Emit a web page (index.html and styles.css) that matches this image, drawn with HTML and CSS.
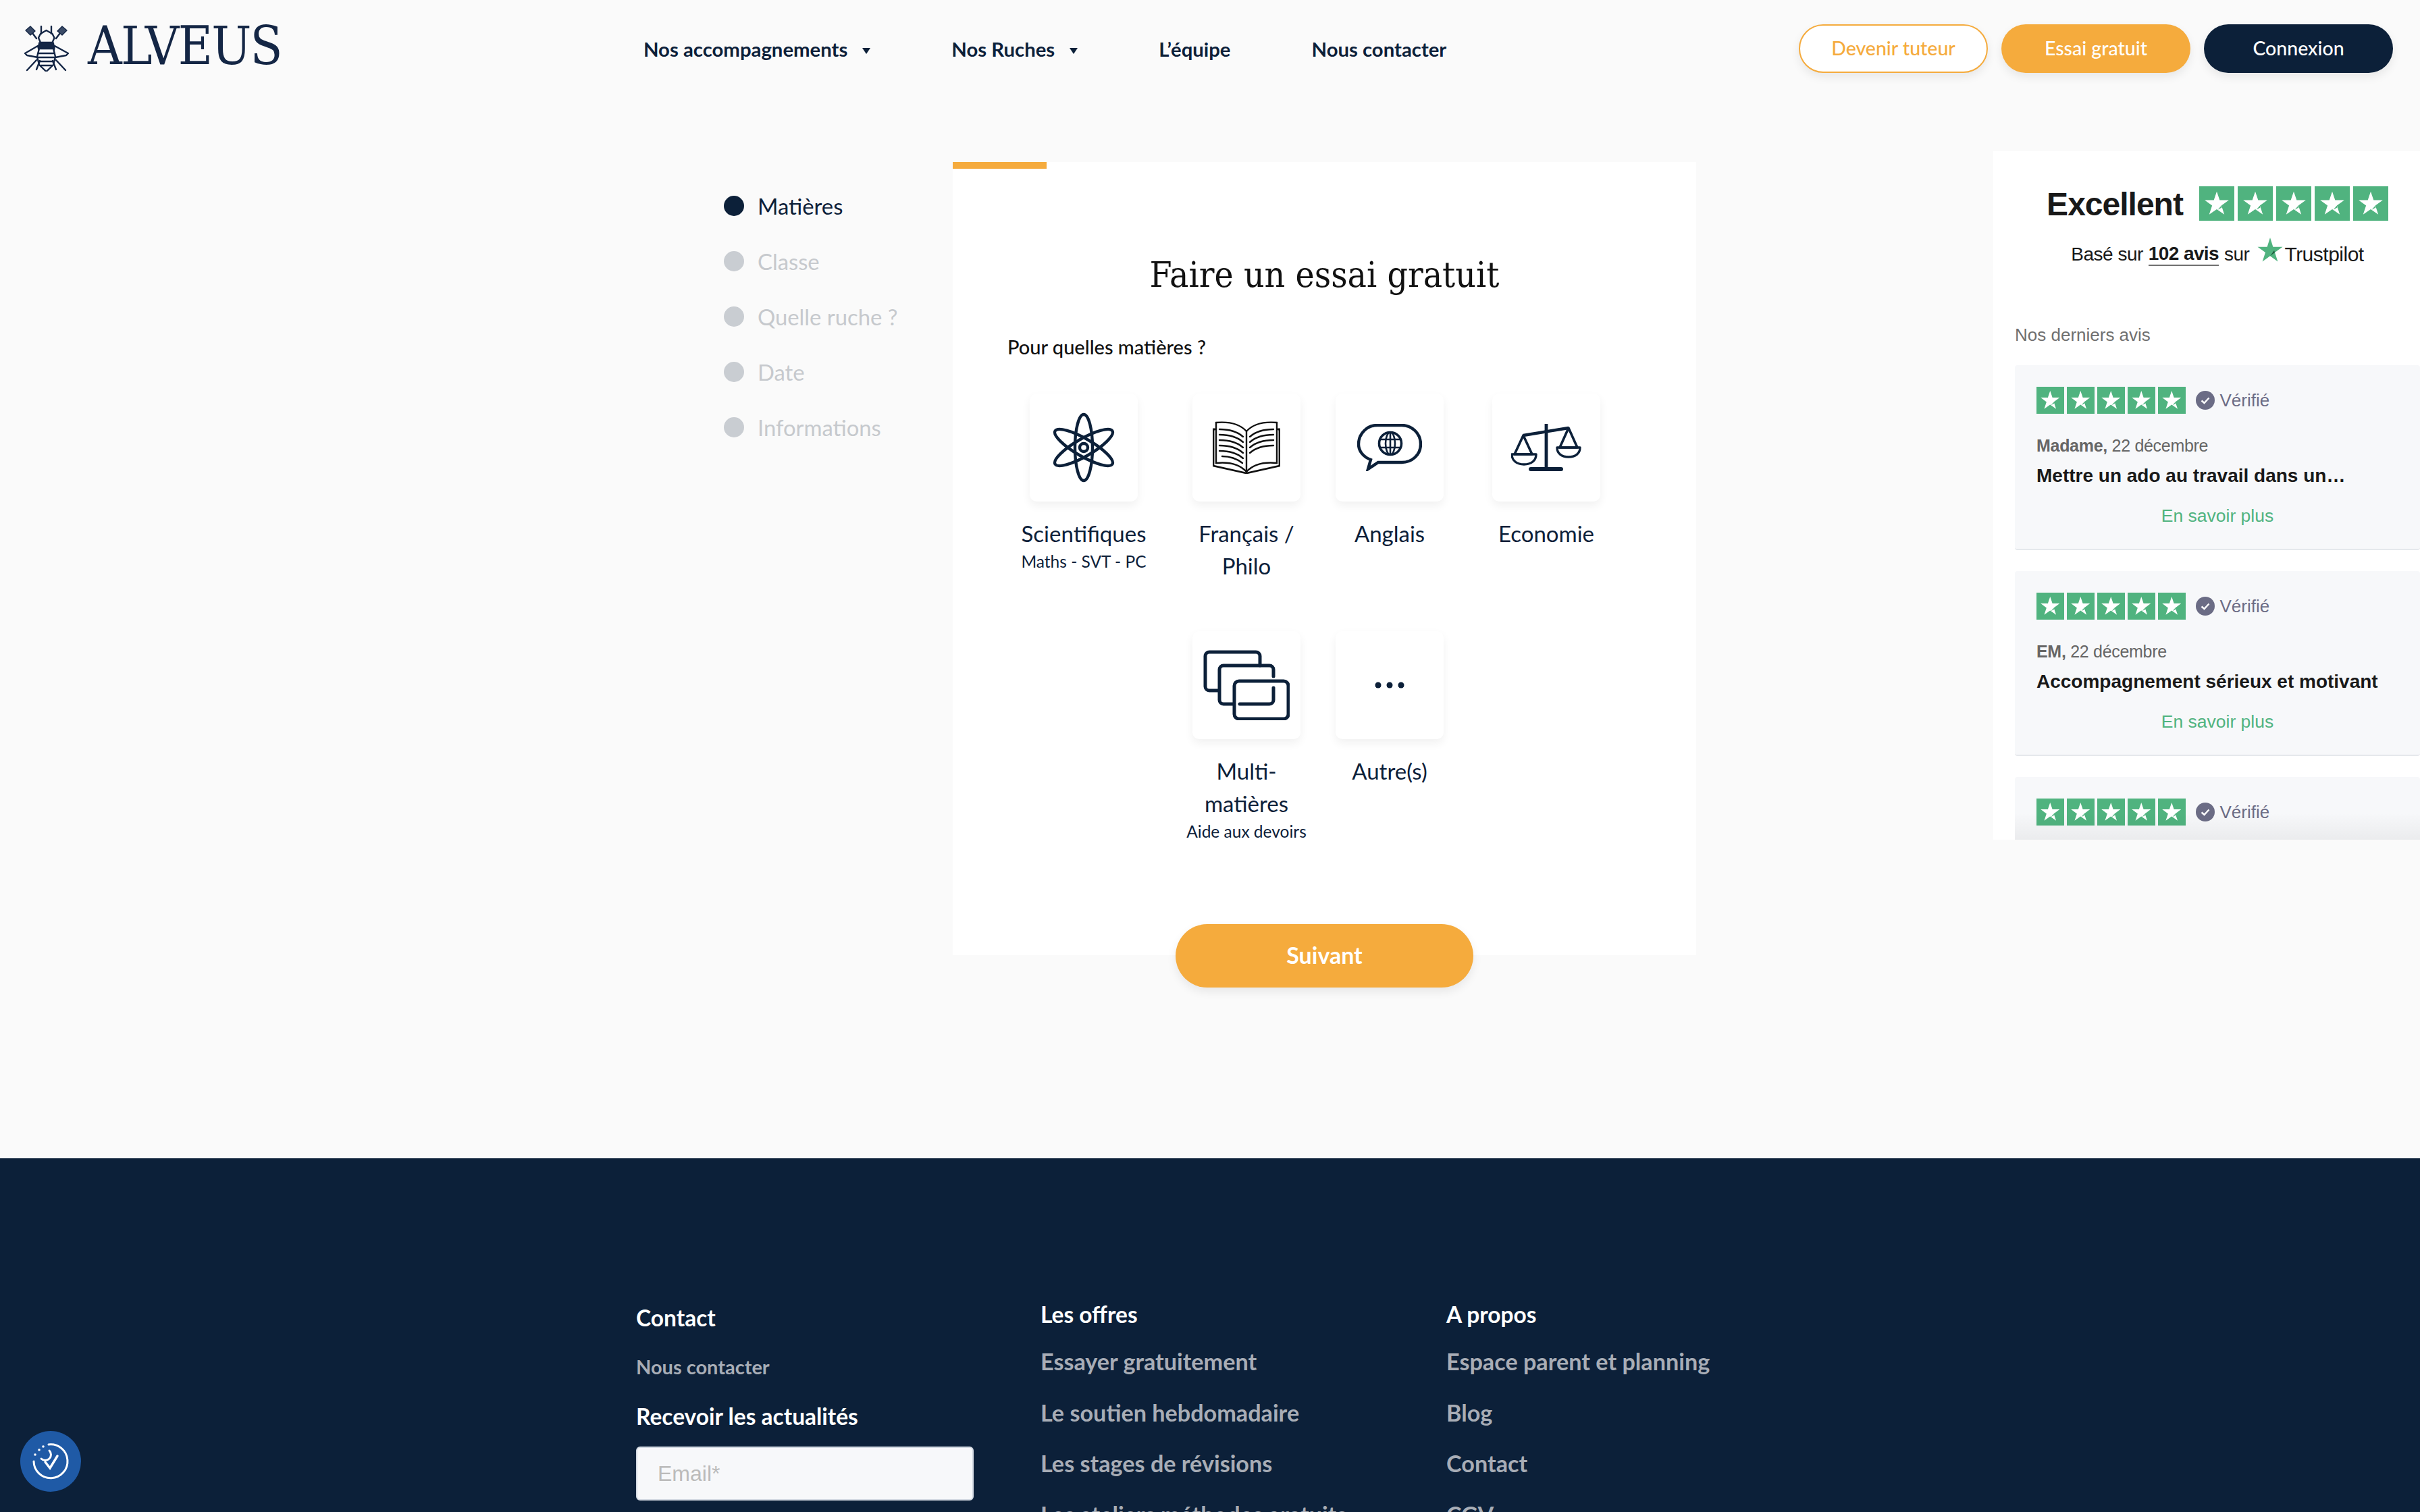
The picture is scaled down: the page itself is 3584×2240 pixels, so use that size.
FILE: index.html
```html
<!DOCTYPE html>
<html lang="fr">
<head>
    <meta charset="UTF-8">
    <title>Alveus - Essai gratuit</title>
    <link rel="stylesheet" href="styles.css">
</head>

<body>
    <svg class="defs" width="0" height="0">
        <symbol id="tp-star" viewBox="0 0 100 100">
            <polygon points="50,15 58.5,40 85,40 63.5,56 72,82 50,66.5 28,82 36.5,56 15,40 41.5,40" fill="#fff"/>
            <polygon points="53,68 64.5,62 63.5,56" fill="#50b37f"/>
        </symbol>
    </svg>

    <header class="site-header">
        <a class="logo">
            <svg class="logo-bee" viewBox="0 0 68 68" fill="none" stroke="#142645" stroke-width="2.4" stroke-linecap="round" stroke-linejoin="round">
                <path d="M26 1v11M41 1v11"/>
                <path d="M33.500 7l9 5 3 6-3 7H25l-3-7 3-6z"/>
                <path d="M23 25h21l2 9H21z" fill="#142645" stroke-width="1.6"/>
                <path d="M21 30L2 41l3 3 16 3 3-6zM46 30l20 11-3 3-16 3-3-6z" fill="#fbfbfc"/>
                <path d="M23 34h21l3 12-3 12-10.500 10L23 58l-3-12z" fill="#fbfbfc"/>
                <path d="M21 41h25M21 47h26M23 53h21M25 59h17"/>
                <path d="M19 19l-6-8M48 19l6-8M19 51L5 66M48 51l14 15M24 52l-5 13M43 52l5 13"/>
                <path d="M3 7l7-6 7 7-7 6zM64 7l-7-6-7 7 7 6z" fill="#3a4a66" stroke-width="1.4"/>
            </svg>
            <span class="logo-text">ALVEUS</span>
        </a>
        <nav class="main-nav">
            <a class="has-caret">Nos accompagnements</a>
            <a class="has-caret">Nos Ruches</a>
            <a>L’équipe</a>
            <a>Nous contacter</a>
        </nav>
        <div class="header-actions">
            <a class="btn btn-outline">Devenir tuteur</a>
            <a class="btn btn-orange">Essai gratuit</a>
            <a class="btn btn-navy">Connexion</a>
        </div>
    </header>

    <main class="page-main">
        <ul class="steps">
            <li class="step active">Matières</li>
            <li class="step">Classe</li>
            <li class="step">Quelle ruche ?</li>
            <li class="step">Date</li>
            <li class="step">Informations</li>
        </ul>

        <section class="trial-card">
            <div class="progress"></div>
            <h1>Faire un essai gratuit</h1>
            <p class="question">Pour quelles matières ?</p>
            <div class="subjects">
                <div class="subject">
                    <div class="subject-box">
                        <svg class="icon-atom" viewBox="0 0 92 104" fill="none" stroke="#0c2039" stroke-width="4.4">
                            <ellipse cx="46" cy="52" rx="13" ry="49"/>
                            <ellipse cx="46" cy="52" rx="13" ry="49" transform="rotate(60 46 52)"/>
                            <ellipse cx="46" cy="52" rx="13" ry="49" transform="rotate(-60 46 52)"/>
                            <circle cx="46" cy="52" r="6"/>
                        </svg>
                    </div>
                    <div class="subject-name">Scientifiques</div>
                    <div class="subject-sub">Maths - SVT - PC</div>
                </div>
                <div class="subject">
                    <div class="subject-box">
                        <svg class="icon-book" viewBox="0 0 100 78" fill="none" stroke="#111" stroke-width="2.4" stroke-linecap="round">
                            <path d="M3 12H1v54l49 11 49-11V12h-2" stroke-width="2.8"/>
                            <path d="M50 15C42 6 28 0 5 2v60c20-2 36 3 45 13 9-10 25-15 45-13V2C72 0 58 6 50 15zM50 15v60"/>
                            <path d="M10 12c14 0 26 3 35 11M10 20c14 0 26 3 35 11M10 28c14 0 26 3 35 11M10 36c14 0 26 3 35 11M10 44c14 0 26 3 35 11M14 52c11 0 21 3 30 10"/>
                            <path d="M55 23c9-8 21-11 35-11M55 31c9-8 21-11 35-11M55 39c9-8 21-11 35-11M55 47c9-8 21-11 35-11"/>
                        </svg>
                    </div>
                    <div class="subject-name">Français / Philo</div>
                </div>
                <div class="subject">
                    <div class="subject-box">
                        <svg class="icon-bubble" viewBox="0 0 96 70" fill="none" stroke="#0c2039" stroke-width="4.4">
                            <path d="M30 2h36c15 0 28 12 28 28s-13 27-28 27H31L16 67l4-14C9 49 2 40 2 30 2 14 15 2 30 2z"/>
                            <circle cx="49" cy="29" r="16.5" stroke-width="3.6"/>
                            <ellipse cx="49" cy="29" rx="7" ry="16.5" stroke-width="2.6"/>
                            <path d="M49 13v32M33 23h32M33 35h32" stroke-width="2.6"/>
                        </svg>
                    </div>
                    <div class="subject-name">Anglais</div>
                </div>
                <div class="subject">
                    <div class="subject-box">
                        <svg class="icon-scales" viewBox="0 0 104 72" fill="none" stroke="#0c2039" stroke-width="3.6" stroke-linejoin="round">
                            <path d="M52 1v66" stroke-width="4.8"/>
                            <path d="M29 68h45" stroke-width="6" stroke-linecap="round"/>
                            <path d="M18 18l67-11" stroke-width="4.4"/>
                            <path d="M18 18L5 46h26zM85 7L72 36h26z"/>
                            <path d="M1 46h36c0 10-8 15-18 15S1 56 1 46zM68 36h34c0 9-7 14-17 14s-17-5-17-14z" stroke-width="3.4"/>
                        </svg>
                    </div>
                    <div class="subject-name">Economie</div>
                </div>
                <div class="subject second-row">
                    <div class="subject-box">
                        <svg class="icon-multi" viewBox="0 0 128 104" fill="none" stroke="#0c2039" stroke-width="5" stroke-linecap="round">
                            <path d="M23 60H9a6 6 0 0 1-6-6V9a6 6 0 0 1 6-6h69a6 6 0 0 1 6 6v14"/>
                            <path d="M44 80H30a6 6 0 0 1-6-6V29a6 6 0 0 1 6-6h68a6 6 0 0 1 6 6v10M54 80h44a6 6 0 0 0 6-6V56"/>
                            <rect x="46" y="46" width="80" height="56" rx="7"/>
                        </svg>
                    </div>
                    <div class="subject-name">Multi-matières</div>
                    <div class="subject-sub">Aide aux devoirs</div>
                </div>
                <div class="subject">
                    <div class="subject-box">
                        <svg class="icon-dots" viewBox="0 0 44 10" fill="#0c2039">
                            <circle cx="5" cy="5" r="4.5"/>
                            <circle cx="22" cy="5" r="4.5"/>
                            <circle cx="39" cy="5" r="4.5"/>
                        </svg>
                    </div>
                    <div class="subject-name">Autre(s)</div>
                </div>
            </div>
            <button class="next-btn" type="button">Suivant</button>
        </section>

        <aside class="reviews">
            <div class="tp-head">
                <span class="tp-excellent">Excellent</span>
                <span class="tp-stars big">
                    <span><svg><use href="#tp-star"/></svg></span>
                    <span><svg><use href="#tp-star"/></svg></span>
                    <span><svg><use href="#tp-star"/></svg></span>
                    <span><svg><use href="#tp-star"/></svg></span>
                    <span><svg><use href="#tp-star"/></svg></span>
                </span>
            </div>
            <div class="tp-based">
                Basé sur <a>102 avis</a> sur
                <span class="tp-brand">
                    <svg viewBox="0 0 40 38">
                        <polygon points="20,0 24.6,14.4 39.5,14.4 27.4,23.2 32,37.6 20,28.8 8,37.6 12.6,23.2 .5,14.4 15.4,14.4" fill="#50b37f"/>
                        <polygon points="20,28.8 27.4,23.2 26.4,20" fill="#1d5a3c"/>
                    </svg>
                    Trustpilot
                </span>
            </div>
            <div class="tp-latest">Nos derniers avis</div>

            <article class="review">
                <div class="review-top">
                    <span class="tp-stars">
                        <span><svg><use href="#tp-star"/></svg></span>
                        <span><svg><use href="#tp-star"/></svg></span>
                        <span><svg><use href="#tp-star"/></svg></span>
                        <span><svg><use href="#tp-star"/></svg></span>
                        <span><svg><use href="#tp-star"/></svg></span>
                    </span>
                    <svg class="check" viewBox="0 0 28 28"><circle cx="14" cy="14" r="14" fill="#6b6c85"/><path d="M8.500 14.500l4 3.500 7-7.500" fill="none" stroke="#fff" stroke-width="2.400"/></svg>
                    <span class="verified">Vérifié</span>
                </div>
                <div class="review-author"><b>Madame,</b> 22 décembre</div>
                <div class="review-title">Mettre un ado au travail dans un…</div>
                <a class="review-more">En savoir plus</a>
            </article>

            <article class="review">
                <div class="review-top">
                    <span class="tp-stars">
                        <span><svg><use href="#tp-star"/></svg></span>
                        <span><svg><use href="#tp-star"/></svg></span>
                        <span><svg><use href="#tp-star"/></svg></span>
                        <span><svg><use href="#tp-star"/></svg></span>
                        <span><svg><use href="#tp-star"/></svg></span>
                    </span>
                    <svg class="check" viewBox="0 0 28 28"><circle cx="14" cy="14" r="14" fill="#6b6c85"/><path d="M8.500 14.500l4 3.500 7-7.500" fill="none" stroke="#fff" stroke-width="2.400"/></svg>
                    <span class="verified">Vérifié</span>
                </div>
                <div class="review-author"><b>EM,</b> 22 décembre</div>
                <div class="review-title">Accompagnement sérieux et motivant</div>
                <a class="review-more">En savoir plus</a>
            </article>

            <article class="review">
                <div class="review-top">
                    <span class="tp-stars">
                        <span><svg><use href="#tp-star"/></svg></span>
                        <span><svg><use href="#tp-star"/></svg></span>
                        <span><svg><use href="#tp-star"/></svg></span>
                        <span><svg><use href="#tp-star"/></svg></span>
                        <span><svg><use href="#tp-star"/></svg></span>
                    </span>
                    <svg class="check" viewBox="0 0 28 28"><circle cx="14" cy="14" r="14" fill="#6b6c85"/><path d="M8.500 14.500l4 3.500 7-7.500" fill="none" stroke="#fff" stroke-width="2.400"/></svg>
                    <span class="verified">Vérifié</span>
                </div>
            </article>
            <div class="reviews-fade"></div>
        </aside>
    </main>

    <footer class="site-footer">
        <div class="footer-col contact-col">
            <h3>Contact</h3>
            <a class="contact-link">Nous contacter</a>
            <h3 class="news-title">Recevoir les actualités</h3>
            <input class="news-input" type="text" placeholder="Email*">
        </div>
        <div class="footer-col">
            <h3>Les offres</h3>
            <a>Essayer gratuitement</a>
            <a>Le soutien hebdomadaire</a>
            <a>Les stages de révisions</a>
            <a>Les ateliers méthodes gratuits</a>
        </div>
        <div class="footer-col">
            <h3>A propos</h3>
            <a>Espace parent et planning</a>
            <a>Blog</a>
            <a>Contact</a>
            <a>CGV</a>
        </div>
    </footer>

    <div class="a11y-badge">
        <svg viewBox="0 0 60 60" fill="none" stroke="#fff" stroke-width="3" stroke-linecap="round">
            <path d="M27 5a25 25 0 1 1-22 25"/>
            <path d="M28 14a8 8 0 0 1-12 12"/>
            <path d="M22 31l7 9 11-18" stroke-width="3.4"/>
            <circle cx="13" cy="13" r="1.8" fill="#fff" stroke="none"/>
            <circle cx="7" cy="20" r="1.8" fill="#fff" stroke="none"/>
            <circle cx="19" cy="8" r="1.8" fill="#fff" stroke="none"/>
        </svg>
    </div>
</body>
</html>
```

FILE: styles.css
```css
* {
    box-sizing: border-box;
    margin: 0;
    padding: 0;
}

html,
body {
    height: 2240px;
    overflow: hidden;
}

body {
    position: relative;
    background-color: #fafafa;
    font-family: 'Lato', 'Noto Sans', sans-serif;
    color: #0c2039;
}

.defs {
    position: absolute;
}

/* header */

.site-header {
    display: flex;
    align-items: center;
    height: 144px;
    padding: 0 40px 0 35px;
}

.logo {
    display: flex;
    align-items: center;
    gap: 27px;
    width: 918px;
}

.logo-bee {
    width: 68px;
    height: 68px;
}

.logo-text {
    margin-top: -9px;
    font-family: 'DejaVu Serif Condensed', 'DejaVu Serif', serif;
    font-size: 78px;
    line-height: 78px;
    letter-spacing: -1.7px;
    color: #142645;
}

.main-nav {
    display: flex;
    gap: 120px;
    font-size: 29.3px;
    font-weight: 700;
}

.has-caret::after {
    content: '';
    display: inline-block;
    margin-left: 22px;
    vertical-align: 4px;
    border-left: 6px solid transparent;
    border-right: 6px solid transparent;
    border-top: 9px solid #0c2039;
}

.header-actions {
    display: flex;
    gap: 20px;
    margin-left: auto;
}

.btn {
    display: flex;
    align-items: center;
    justify-content: center;
    width: 280px;
    height: 72px;
    padding-bottom: 2px;
    border-radius: 36px;
    font-size: 28.5px;
    font-weight: 500;
    box-shadow: 0 6px 14px rgba(0, 0, 0, 0.08);
}

.btn-outline {
    background-color: #fff;
    border: 2px solid #f5ab3d;
    color: #f5ab3d;
}

.btn-orange {
    background-color: #f5ab3d;
    color: #fff;
}

.btn-navy {
    background-color: #0c2039;
    color: #fff;
}

/* main */

.page-main {
    display: flex;
    align-items: flex-start;
    height: 1572px;
    padding-top: 96px;
}

.steps {
    list-style: none;
    width: 339px;
    margin: 24px 0 0 1072px;
}

.step {
    display: flex;
    align-items: center;
    gap: 20px;
    height: 82px;
    font-size: 32.8px;
    color: #c6c9cd;
}

.step::before {
    content: '';
    width: 30px;
    height: 30px;
    border-radius: 50%;
    background-color: #c9cdd2;
}

.step.active {
    color: #0c2039;
}

.step.active::before {
    background-color: #0c2039;
}

.trial-card {
    display: flex;
    flex-direction: column;
    width: 1101px;
    height: 1175px;
    background-color: #fff;
}

.trial-card > * {
    flex-shrink: 0;
}

.progress {
    width: 139px;
    height: 10px;
    background-color: #f5ab3d;
}

h1 {
    margin-top: 123px;
    font-family: 'DejaVu Serif Condensed', 'DejaVu Serif', serif;
    font-size: 53px;
    font-weight: 400;
    line-height: 68px;
    text-align: center;
    color: #111;
}

.question {
    margin: 53px 0 0 81px;
    font-size: 29px;
    font-weight: 500;
    line-height: 40px;
    color: #111;
}

.subjects {
    display: grid;
    grid-template-columns: 218px 160px 160px 200px;
    column-gap: 52px;
    row-gap: 73px;
    margin: 49px 0 0 85px;
}

.subject {
    display: flex;
    flex-direction: column;
    align-items: center;
    text-align: center;
}

.second-row {
    grid-column: 2;
}

.subject-box {
    display: flex;
    align-items: center;
    justify-content: center;
    width: 160px;
    height: 160px;
    margin-bottom: 23px;
    background-color: #fff;
    border-radius: 10px;
    box-shadow: 0 6px 14px rgba(0, 0, 0, 0.06);
}

.subject-name {
    width: 100%;
    font-size: 33px;
    line-height: 48px;
}

.subject-sub {
    margin-top: 1px;
    font-size: 24.5px;
    line-height: 34px;
    white-space: nowrap;
}

.icon-atom {
    width: 92px;
    height: 104px;
}

.icon-book {
    width: 100px;
    height: 78px;
}

.icon-bubble {
    width: 96px;
    height: 70px;
}

.icon-scales {
    width: 104px;
    height: 72px;
}

.icon-multi {
    width: 128px;
    height: 104px;
}

.icon-dots {
    width: 44px;
    height: 10px;
}

.next-btn {
    align-self: center;
    width: 441px;
    height: 94px;
    margin-top: 120px;
    padding-bottom: 3px;
    border: none;
    border-radius: 47px;
    background-color: #f5ab3d;
    color: #fff;
    font-family: inherit;
    font-size: 34px;
    font-weight: 700;
    box-shadow: 0 6px 14px rgba(0, 0, 0, 0.08);
}

/* trustpilot widget */

.reviews {
    position: relative;
    width: 632px;
    height: 1020px;
    margin: -16px 0 0 auto;
    padding: 52px 0 0 32px;
    overflow: hidden;
    background-color: #fff;
    font-family: 'Liberation Sans', Arial, sans-serif;
    color: #191919;
}

.tp-head {
    display: flex;
    align-items: center;
    justify-content: center;
    gap: 24px;
    height: 51px;
}

.tp-excellent {
    padding-top: 3px;
    font-size: 48px;
    font-weight: 700;
    line-height: 48px;
    letter-spacing: -1px;
}

.tp-stars {
    display: flex;
    gap: 4.5px;
}

.tp-stars span {
    width: 40.5px;
    height: 40px;
    background-color: #50b37f;
}

.tp-stars svg {
    display: block;
    width: 100%;
    height: 100%;
}

.tp-stars.big {
    gap: 5px;
}

.tp-stars.big span {
    width: 52px;
    height: 51px;
}

.tp-based {
    display: flex;
    align-items: center;
    justify-content: center;
    gap: 8px;
    height: 40px;
    margin-top: 30px;
    font-size: 28px;
    letter-spacing: -0.5px;
}

.tp-based a {
    font-weight: 700;
    line-height: 32px;
    letter-spacing: -0.6px;
    border-bottom: 2px solid #707070;
}

.tp-brand {
    display: flex;
    align-items: center;
    gap: 2px;
    margin-left: 4px;
    font-size: 30px;
    font-weight: 500;
}

.tp-brand svg {
    width: 38px;
    height: 36px;
    margin-top: -14px;
}

.tp-latest {
    margin: 84px 0 30px;
    font-size: 26px;
    line-height: 30px;
    color: #6f6f6f;
}

.review {
    width: 600px;
    height: 274px;
    margin-bottom: 31px;
    padding: 32px;
    background-color: #f7f8fa;
    border-bottom: 2px solid #e5e8ec;
    border-radius: 4px;
}

.review-top {
    display: flex;
    align-items: center;
}

.check {
    width: 28px;
    height: 28px;
    margin-left: 15px;
}

.verified {
    margin-left: 8px;
    font-size: 26px;
    color: #6b6c85;
}

.review-author {
    margin-top: 32px;
    font-size: 25px;
    line-height: 30px;
    letter-spacing: -0.3px;
    color: #666;
}

.review-title {
    margin-top: 12px;
    font-size: 28px;
    font-weight: 700;
    line-height: 36px;
}

.review-more {
    display: block;
    margin-top: 25px;
    margin-left: -32px;
    margin-right: -32px;
    font-size: 26.5px;
    line-height: 32px;
    text-align: center;
    color: #50b37f;
}

.reviews-fade {
    position: absolute;
    right: 0;
    bottom: 0;
    left: 32px;
    height: 40px;
    background: linear-gradient(rgba(0, 0, 0, 0), rgba(0, 0, 0, 0.05));
}

/* footer */

.site-footer {
    display: grid;
    grid-template-columns: 599px 601px 600px;
    padding: 210px 0 0 942px;
    height: 524px;
    overflow: hidden;
    background-color: #0c2039;
}

.footer-col {
    display: flex;
    flex-direction: column;
}

.footer-col h3 {
    font-size: 33.5px;
    font-weight: 700;
    line-height: 42px;
    color: #fff;
}

.footer-col a {
    margin-top: 33.5px;
    font-size: 34.2px;
    font-weight: 700;
    line-height: 42px;
    color: #a8adb6;
}

.footer-col h3 + a {
    margin-top: 28px;
}

.contact-col {
    padding-top: 5px;
}

.footer-col .contact-link {
    margin-top: 34px;
    font-size: 29px;
    line-height: 36px;
}

.footer-col .news-title {
    margin-top: 34px;
}

.news-input {
    width: 500px;
    height: 80px;
    margin-top: 24px;
    padding: 0 30px;
    background-color: #f7f8fa;
    border: 2px solid #d3d9e2;
    border-radius: 6px;
    font-family: 'Liberation Sans', Arial, sans-serif;
    font-size: 32px;
}

.news-input::placeholder {
    color: #bbb;
}

.a11y-badge {
    position: absolute;
    left: 30px;
    top: 2120px;
    display: flex;
    align-items: center;
    justify-content: center;
    width: 90px;
    height: 90px;
    border-radius: 50%;
    background-color: #1f5aa6;
}

.a11y-badge svg {
    width: 60px;
    height: 60px;
}
```
